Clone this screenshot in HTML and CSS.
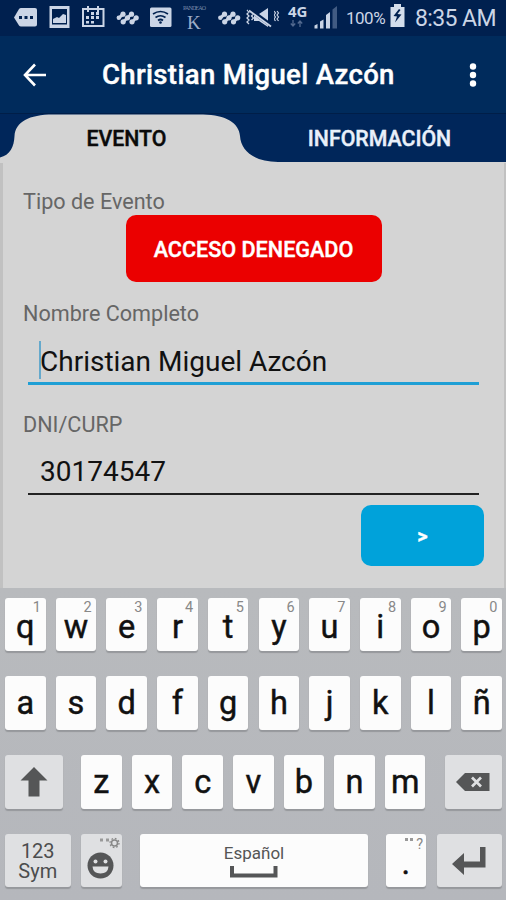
FILE: index.html
```html
<!DOCTYPE html>
<html lang="es">
<head>
<meta charset="utf-8">
<title>Christian Miguel Azcón</title>
<link rel="stylesheet" href="styles.css">
</head>
<body>
<header class="status">
  <svg class="notifications" width="274" height="36" viewBox="0 0 274 36" fill="#cbd5e6">
    <path d="M14 17.500l5-8.500q.8-1 2-1H35q2 0 2 2v14.500q0 2-2 2H21q-1.200 0-2-1z"/>
    <path d="M19 16h3v3h-3zM24.500 16h3v3h-3zM30 16h3v3h-3z" fill="#00204f"/>
    <path fill-rule="evenodd" d="M49.500 6H69.500V28H49.500zM52 9V24.500H67V9z"/>
    <path d="M53 23v-4l4-2 2 1 4-4 3 1v8z"/>
    <path d="M83 9H103.500V26H83z" fill="none" stroke="#cbd5e6" stroke-width="2"/>
    <path d="M87 6h2v6h-2zM97 6h2v6h-2zM91 12h3v3h-3zM96 12h3v3h-3zM86 16h3v3h-3zM91 16h3v3h-3zM96 16h3v3h-3zM86 21h3v2.500h-3zM91 21h3v2.500h-3z"/>
    <g id="beads">
      <circle cx="118.800" cy="17.800" r="2.200"/><circle cx="123" cy="14.200" r="2.600"/><circle cx="123.200" cy="21.800" r="2.600"/><circle cx="127.500" cy="17.800" r="2.600"/><circle cx="131.500" cy="14.200" r="2.600"/><circle cx="132" cy="21.800" r="2.600"/><circle cx="136.200" cy="17.800" r="2.600"/>
      <path d="M119 17.800l4-3.600M123 22l8.500-8M132 22l4-4" stroke="#cbd5e6" stroke-width="3"/>
    </g>
    <use href="#beads" x="101.500"/>
    <rect x="150" y="7.500" width="21.500" height="19.500" rx="1.500"/>
    <path d="M153 14q7.500-5 15 0M155.500 17.500q5-3.500 10 0M158 20.500q2.500-2 5 0" fill="none" stroke="#00204f" stroke-width="1.700"/>
    <circle cx="160.500" cy="22.500" r="1.300" fill="#00204f"/>
    <text class="tiny" x="183" y="9.500" textLength="23">PANDEAO</text>
    <text class="serif" x="187" y="28.500">K</text>
    <path d="M247 10l2 2-2 2 2 2-2 2 2 2-2 2 2 2M251.500 12l2 2-2 2 2 2-2 2" fill="none" stroke="#cbd5e6" stroke-width="1.300"/>
    <path d="M254 14h5l9-6v19l-9-6h-5z"/>
    <path d="M249 9l23 17" stroke="#00204f" stroke-width="4"/><path d="M249 10.500l22 16" stroke="#cbd5e6" stroke-width="1.800"/>
  </svg>
  <svg class="network" width="66" height="36" viewBox="0 0 66 36" fill="#cbd5e6">
    <path d="M0 11l1.500 2-1.500 2 1.500 2-1.500 2 1.500 2M3 11l1.500 2-1.500 2 1.500 2-1.500 2 1.500 2" fill="none" stroke="#cbd5e6" stroke-width="1.200"/>
    <text class="lte" x="14" y="16.500">4G</text>
    <path d="M19 20v6M16.800 23.500l2.200 2.500 2.200-2.500M26 27v-6M23.800 23.500l2.200-2.500 2.200 2.500" fill="none" stroke="#52698f" stroke-width="1.300"/>
    <path d="M40.500 25.500l3-1.500v4.500h-3zM46 21.500l3.500-2v9H46zM52 15l4-3v16.500h-4z"/>
    <path d="M58.500 9.500l4.500-3.500v22.500h-4.500z" fill="#415b83"/>
  </svg>
  <span class="percent">100%</span>
  <svg class="battery" width="15" height="24" viewBox="0 0 15 24"><path d="M4 0h7v3h3.500v20H.5V3H4z" fill="#d4deec"/><path d="M9 5l-5.500 7 3.500.5-2 6 6.500-8-4-.5 3-4z" fill="#00204f"/></svg>
  <time class="clock">8:35 AM</time>
</header>
<div class="appbar">
  <svg width="24" height="24" viewBox="0 0 24 24" fill="none" stroke="#fff" stroke-width="2.600"><path d="M12 1.500L2 12l10 10.500M2 12h21"/></svg>
  <h1>Christian Miguel Azcón</h1>
  <svg width="8" height="24" viewBox="0 0 8 24" fill="#fff"><circle cx="4" cy="3.500" r="3.200"/><circle cx="4" cy="12" r="3.200"/><circle cx="4" cy="20.500" r="3.200"/></svg>
</div>
<nav class="tabs">
  <svg class="tab-shape" width="506" height="50" viewBox="0 0 506 50"><path d="M0 44.500C10 42 14 34 14.500 23C15.500 9 29 1.500 53 1.500H203C226 2 239 10 240 23C241 38 254 48.500 278 49H506V50H0z" fill="#d4d4d4"/></svg>
  <a class="active">EVENTO</a><a>INFORMACIÓN</a>
</nav>
<main class="form">
  <label class="first">Tipo de Evento</label>
  <button class="denied">ACCESO DENEGADO</button>
  <label>Nombre Completo</label>
  <div class="field focus">Christian Miguel Azcón</div>
  <label class="third">DNI/CURP</label>
  <div class="field">30174547</div>
  <button class="next">&gt;</button>
</main>
<section class="keyboard">
  <div class="row first-row">
    <div class="key">q<sup>1</sup></div><div class="key">w<sup>2</sup></div><div class="key">e<sup>3</sup></div><div class="key">r<sup>4</sup></div><div class="key">t<sup>5</sup></div><div class="key">y<sup>6</sup></div><div class="key">u<sup>7</sup></div><div class="key">i<sup>8</sup></div><div class="key">o<sup>9</sup></div><div class="key">p<sup>0</sup></div>
  </div>
  <div class="row">
    <div class="key">a</div><div class="key">s</div><div class="key">d</div><div class="key">f</div><div class="key">g</div><div class="key">h</div><div class="key">j</div><div class="key">k</div><div class="key">l</div><div class="key">ñ</div>
  </div>
  <div class="row third-row">
    <div class="key grey"><svg width="28" height="32" viewBox="0 0 28 32"><path d="M14 1L27.500 14.500H19.500V30.500H8.500V14.500H.5z" fill="#555657"/></svg></div>
    <div class="key">z</div><div class="key">x</div><div class="key">c</div><div class="key">v</div><div class="key">b</div><div class="key">n</div><div class="key">m</div>
    <div class="key grey"><svg width="34" height="20" viewBox="0 0 34 20"><path d="M0 10L9 1H33.500V19H9z" fill="#555657"/><path d="M16 5.500l9 9M25 5.500l-9 9" stroke="#dfe0e2" stroke-width="2.700"/></svg></div>
  </div>
  <div class="row fourth-row">
    <div class="key grey sym"><span>123</span><span>Sym</span></div>
    <div class="key grey emoji">
      <svg width="40" height="53" viewBox="0 0 40 53"><path d="M19 4.500h3v3h-3zM25 4.500h3v3h-3z" fill="#999"/><circle cx="33.500" cy="9" r="3" fill="none" stroke="#888" stroke-width="1.500"/><circle cx="33.500" cy="9" r="4.500" fill="none" stroke="#888" stroke-width="1.300" stroke-dasharray="1.700 1.800"/><circle cx="19.500" cy="31.500" r="13" fill="#555657"/><circle cx="14.500" cy="27.500" r="2" fill="#dfe0e2"/><circle cx="24.500" cy="27.500" r="2" fill="#dfe0e2"/><path d="M11.500 32.500h16q-.5 7-8 7t-8-7z" fill="#dfe0e2"/></svg>
    </div>
    <div class="key space"><span>Español</span><svg width="48" height="12" viewBox="0 0 48 12"><path d="M2 0v9.500h43.500V0" fill="none" stroke="#555657" stroke-width="4"/></svg></div>
    <div class="key dot"><svg class="hint" width="8" height="4" viewBox="0 0 8 4"><path d="M0 0h3v3H0zM5 0h3v3H5z" fill="#999"/></svg>.<sup>?</sup></div>
    <div class="key grey"><svg width="34" height="28" viewBox="0 0 34 28"><path d="M28 0h5.500v20.500H12V28L0 17 12 6v8.500h16z" fill="#555657"/></svg></div>
  </div>
</section>
</body>
</html>
```
FILE: styles.css
```css
* { box-sizing: border-box; }
body { margin: 0; width: 506px; height: 900px; overflow: hidden; font-family: Roboto, sans-serif; background: #d4d4d4; }
button { border: 0; padding: 0; font: 500 21.6px Roboto, sans-serif; color: #fff; -webkit-text-stroke: .4px; }
svg { display: block; flex: none; }

.status { height: 36px; display: flex; align-items: center; background: #00204f; color: #cbd5e6; }
.percent { width: 40px; margin-left: 6px; font-size: 17px; letter-spacing: -.5px; }
.battery { margin-left: 4px; margin-top: -4px; }
.clock { margin-left: 10px; font-size: 23px; letter-spacing: -.6px; white-space: nowrap; }
.tiny { font: 6px "Liberation Serif", serif; fill: #7487a8; }
.serif { font: 19px "Liberation Serif", serif; fill: #9dadc8; }
.lte { font: bold 15px "Noto Sans", sans-serif; }

.appbar { height: 77px; display: flex; align-items: center; padding: 0 29px 0 23px; background: #002b5c; }
.appbar h1 { flex: 1; margin: 0 0 0 55px; font-size: 27.500px; font-weight: 500; letter-spacing: .35px; line-height: 32px; color: #fff; white-space: nowrap; -webkit-text-stroke: .4px; }

.tabs { position: relative; height: 49px; display: flex; background: #00265a; border-top: 1px solid #001e48; }
.tab-shape { position: absolute; left: 0; top: -1px; }
.tabs a { position: relative; width: 253px; line-height: 49px; text-align: center; font-size: 21.300px; font-weight: 500; color: #e9f0fa; -webkit-text-stroke: .4px; }
.tabs .active { color: #0a0a0a; }

.form { height: 426px; display: flex; flex-direction: column; border: solid #c1c1c1; border-width: 0 2px 0 3px; padding: 0 20px; background: #d4d4d4; }
.form label { height: 30px; line-height: 31px; font-size: 21.600px; color: #666; margin-top: 16px; }
.form .first { margin-top: 24px; height: 29px; }
.denied { align-self: center; width: 256px; height: 67px; padding-top: 1px; border-radius: 10px; background: #eb0000; }
.field { position: relative; height: 57px; margin: 0 5px; padding-left: 12px; line-height: 67px; font-size: 28px; color: #111; border-bottom: 2px solid #222; }
.field.focus { border-bottom: 3px solid #1f9fd5; }
.field.focus::before { content: ""; position: absolute; left: 11px; top: 13px; width: 2px; height: 38px; background: #65a9cc; }
.form .third { margin-top: 24px; }
.form .third + .field { height: 56px; line-height: 66px; }
.next { align-self: flex-end; flex: none; width: 123px; height: 61px; margin-top: 10px; border-radius: 10px; background: #00a2da; font-size: 20px; font-weight: 700; }

.keyboard { height: 312px; padding: 9.500px 4px 0 5px; display: flex; flex-direction: column; gap: 24.800px; background: linear-gradient(#b8babd, #b5b7bc); }
.row { display: grid; grid-template-columns: repeat(10, 40.500px); justify-content: space-between; height: 54px; }
.third-row { grid-template-columns: 57.500px repeat(7, 40.500px) 57.500px; justify-content: start; column-gap: 10.150px; }
.third-row .key:nth-child(n+2) { margin-left: 8.500px; margin-right: -8.500px; }
.third-row .key:last-child { margin-left: 17.500px; margin-right: -17.500px; }
.fourth-row { grid-template-columns: 65.500px 40.500px 228px 40.500px 65.500px; justify-content: start; column-gap: 10.500px; }
.fourth-row .key:nth-child(3) { margin-left: 8px; margin-right: -8px; }
.fourth-row .key:nth-child(n+4) { margin-left: 15px; margin-right: -15px; }
.key { position: relative; display: flex; align-items: center; justify-content: center; height: 53.500px; border-radius: 3px; background: #fcfcfc; box-shadow: 0 2px 1px #96989c; font-size: 32.500px; line-height: 30px; color: #111; -webkit-text-stroke: .45px; }
.first-row .key { padding-top: 5px; }
.key sup { position: absolute; right: 4.500px; top: 3px; font-size: 14.500px; line-height: 14px; color: #888; -webkit-text-stroke: 0; }
.key.grey { background: #dfe0e2; }
.key.sym { flex-direction: column; font-size: 20px; line-height: 20px; color: #4c4d4e; -webkit-text-stroke: 0; }
.key.space { flex-direction: column; font-size: 17px; line-height: 18px; color: #555; -webkit-text-stroke: 0; }
.space svg { margin-top: 4px; }
.key.dot { padding-top: 5px; }
.dot sup { right: 3px; top: 4px; }
.hint { position: absolute; right: 13px; top: 4px; }
```
